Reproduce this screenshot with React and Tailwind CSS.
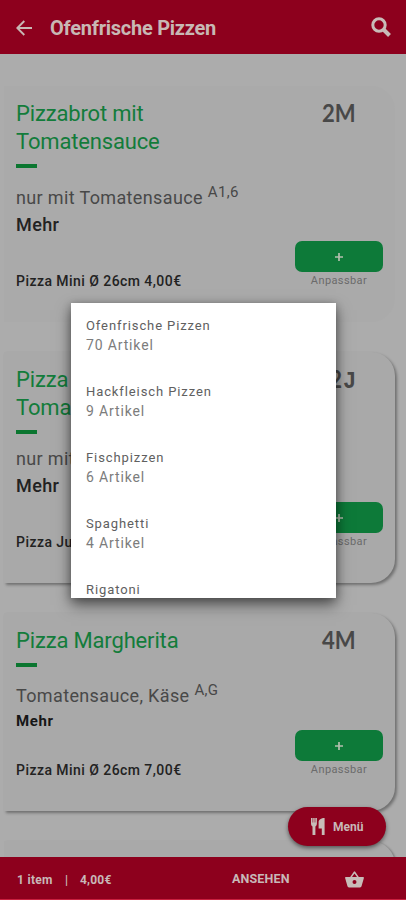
import React from 'react';

const dishes = [
  { title: ['Pizzabrot mit', 'Tomatensauce'], code: '2', suffix: 'M', info: 'nur mit Tomatensauce', sup: 'A1,6', price: 'Pizza Mini Ø 26cm 4,00€', box: 'h-[236px] mt-[32px] bg-[#aaaaaa]', infoGap: 'mt-[18px]', mehr: 'mt-[3px] text-[18px] font-medium leading-[24px] tracking-[0.4px] text-[#222]', order: 'mt-[4px]' },
  { title: ['Pizza', 'Tomatensauce'], code: '2', suffix: 'J', info: 'nur mit Tomatensauce', sup: '', price: 'Pizza Junior Ø 26cm', box: 'h-[231px] mt-[30px] bg-[#a9a9a9] shadow-[2px_2px_3px_rgba(0,0,0,0.35)]', infoGap: 'mt-[13px]', mehr: 'mt-[3px] text-[18px] font-medium leading-[24px] tracking-[0.4px] text-[#222]', order: 'mt-[4px]' },
  { title: ['Pizza Margherita'], code: '4', suffix: 'M', info: 'Tomatensauce, Käse', sup: 'A,G', price: 'Pizza Mini Ø 26cm 7,00€', box: 'h-[198px] mt-[30px] bg-[#a9a9a9] shadow-[2px_2px_3px_rgba(0,0,0,0.35)]', infoGap: 'mt-[17px]', mehr: 'mt-[3px] text-[15px] font-bold leading-[20px] tracking-[0.6px] text-[#161616]', order: '-mt-px' },
];

const categories = [
  ['Ofenfrische Pizzen', '70 Artikel'],
  ['Hackfleisch Pizzen', '9 Artikel'],
  ['Fischpizzen', '6 Artikel'],
  ['Spaghetti', '4 Artikel'],
  ['Rigatoni', ''],
];

function Dish({ dish }) {
  return (
    <article className={`ml-1 flex w-[391px] shrink-0 flex-col rounded-r-[24px] pl-3 pr-3 pt-[14px] ${dish.box}`}>
      <div className="flex justify-between">
        <h2 className="text-[22px] leading-[28px] tracking-[-0.16px] text-[#137c3b]">
          {dish.title.map((line) => <span key={line} className="block">{line}</span>)}
        </h2>
        <div className="mr-[27px] flex h-7 origin-right scale-x-[0.92] items-baseline whitespace-nowrap font-['Lato'] text-[24px] font-bold leading-[26px] text-[#484848]">
          <span>{dish.code}</span>
          {dish.suffix === 'J'
            ? <span className="ml-px font-['Liberation_Mono'] leading-[26px]">J</span>
            : <span>{dish.suffix}</span>}
        </div>
      </div>
      <div className="mt-[8px] h-[4px] w-[21px] shrink-0 bg-[#0b7630]" />
      <p className={`h-[24px] shrink-0 whitespace-nowrap text-[18px] leading-[24px] tracking-[0.36px] text-[#484848] ${dish.infoGap}`}>
        {dish.info}
        {dish.sup && <span className="relative -top-[7px] ml-[5px] text-[15px] leading-none tracking-[0.3px]">{dish.sup}</span>}
      </p>
      <p className={dish.mehr}>Mehr</p>
      <div className={`flex items-start justify-between ${dish.order}`}>
        <p className="mt-[31px] whitespace-nowrap text-[14px] font-medium leading-[18px] tracking-[0.45px] text-[#222]">{dish.price}</p>
        <div className="flex w-[88px] flex-col items-center">
          <button className="flex h-[31px] w-[88px] items-center justify-center rounded-[7px] bg-[#0d7a39]">
            <svg width="8" height="8" viewBox="0 0 8 8" stroke="#b4bfae" strokeWidth="1.7"><path d="M4 0v8M0 4h8" /></svg>
          </button>
          <span className="mt-[1px] text-[11px] leading-[16px] tracking-[0.4px] text-[#6b6b6b]">Anpassbar</span>
        </div>
      </div>
    </article>
  );
}

export default function App() {
  return (
    <div className="relative flex h-[900px] w-[406px] flex-col overflow-hidden bg-[#acacac] font-['Roboto',sans-serif]">
      <header className="flex h-[54px] shrink-0 items-center bg-[#8d001d] pl-4 pr-[15px] pt-[2px]">
        <svg width="16" height="16" viewBox="0 0 16 16" fill="none" stroke="#c8b8b4" strokeWidth="1.9"><path d="M16 8H1.5M8.3 1 1.3 8l7 7" /></svg>
        <h1 className="ml-[18px] flex-1 text-[20px] font-bold leading-6 tracking-[-0.25px] text-[#c8b8b4]">Ofenfrische Pizzen</h1>
        <svg className="-mt-[2px]" width="20" height="20" viewBox="0 0 20 20" fill="none" stroke="#c8bcb8"><circle cx="8" cy="8" r="6.2" strokeWidth="3" /><path d="m12.5 12.5 6 6" strokeWidth="4" /></svg>
      </header>
      <main className="flex min-h-0 flex-1 flex-col overflow-hidden">
        {dishes.map((dish) => <Dish key={dish.price} dish={dish} />)}
        <div className="ml-1 mt-[30px] h-[200px] w-[391px] shrink-0 rounded-r-[24px] bg-[#a9a9a9] shadow-[2px_1px_2px_rgba(0,0,0,0.25)]" />
      </main>
      <footer className="flex h-[43px] shrink-0 items-center border-b border-[#c9203f] bg-[#8d001d] pl-[17px] pt-[3px] text-[12px] font-bold text-[#c8b8b8]">
        <span className="w-[48px] tracking-[0.3px]">1 item</span>
        <span className="w-[15px]">|</span>
        <span className="w-[152px] tracking-[0.2px]">4,00€</span>
        <span className="w-[113px] text-[12.5px] tracking-[0.15px]">ANSEHEN</span>
        <svg width="19" height="17" viewBox="0 0 19 17" fill="#c8bcb8" fillRule="evenodd"><path d="M13.8 6 10.2.7a.9.9 0 0 0-1.4 0L5.2 6H.8c-.5 0-.9.5-.7 1L2.4 15c.2.8.8 1.4 1.6 1.4h11c.8 0 1.4-.6 1.6-1.4L18.9 7c.1-.5-.2-1-.7-1zM7 6l2.5-3.6L12 6zm2.5 7a2 2 0 1 1 0-4 2 2 0 0 1 0 4" /></svg>
      </footer>
      <button className="absolute left-[288px] top-[807px] flex h-[39px] w-[98px] items-center rounded-full bg-[#8d001d] pl-[23px] text-[12px] font-bold text-[#c8b8b8] shadow-[0_2px_4px_rgba(0,0,0,0.5)]">
        <svg width="14" height="17" viewBox="0 0 14 17" fill="#c8bcb8"><path d="M0 0h1.6v4.500h.6V0h1.500v4.500h.6V0h1.600v5.500c0 1.600-.8 2.500-1.500 2.900V17H1.500V8.400C.7 8 0 7.100 0 5.500zM13.600 0v17h-2.800v-6.500H7.600V4c0-2.200 2.500-4 6-4" /></svg>
        <span className="ml-[8px]">Menü</span>
      </button>
      <section className="absolute left-[71px] top-[303px] h-[295px] w-[265px] overflow-hidden bg-white pl-[15px] pt-[14px] shadow-[0_7px_14px_rgba(0,0,0,0.5),0_1px_8px_rgba(0,0,0,0.25)]">
        {categories.map(([name, count]) => (
          <div key={name} className="h-[66px]">
            <p className="text-[13px] leading-[18px] tracking-[0.9px] text-[#606060]">{name}</p>
            <p className="text-[14px] leading-[20px] tracking-[0.85px] text-[#7c7c7c]">{count}</p>
          </div>
        ))}
      </section>
    </div>
  );
}
